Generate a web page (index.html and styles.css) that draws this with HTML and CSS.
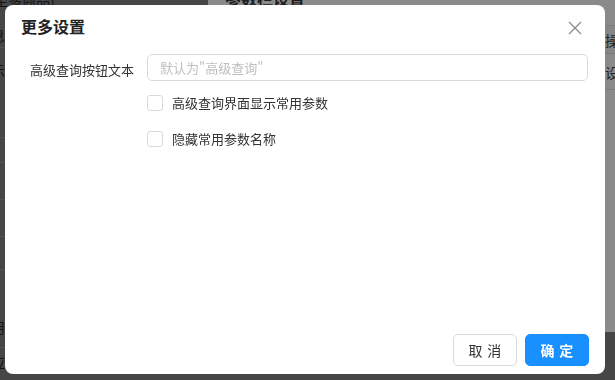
FILE: index.html
```html
<!DOCTYPE html>
<html lang="zh-CN">
<head>
    <meta charset="UTF-8">
    <meta name="viewport" content="width=device-width, initial-scale=1.0">
    <title>更多设置</title>
    <link rel="stylesheet" href="styles.css">
</head>
<body>
    <!-- Page underneath the dialog (already dimmed by the masks) -->
    <div class="page">
        <aside class="side">
            <div class="side-row side-top"><span>至多商品]</span></div>
            <div class="side-row"><span class="cut pad-a">信息</span></div>
            <div class="side-row"><span class="cut pad-b">显示</span></div>
            <div class="side-row"></div>
            <div class="side-row"></div>
            <div class="side-row"></div>
            <div class="side-row"></div>
            <div class="side-row"><span class="cut pad-c">启用</span></div>
            <div class="side-row last"><span class="cut pad-d">对应</span></div>
        </aside>

        <section class="parent">
            <div class="parent-title">参数栏设置</div>
            <div class="parent-table">
                <div class="cell head">参数名称</div>
                <div class="cell head">操作</div>
                <div class="cell">显示</div>
                <div class="cell">设置</div>
            </div>
        </section>
    </div>

    <!-- Dialog -->
    <div class="modal">
        <div class="modal-header">
            <h3>更多设置</h3>
            <button class="close" type="button" aria-label="关闭">
                <svg width="14" height="14" viewBox="0 0 14 14">
                    <path d="M1 1 L13 13 M13 1 L1 13" stroke="#8c8c8c" stroke-width="1.3" fill="none"/>
                </svg>
            </button>
        </div>

        <div class="modal-body">
            <div class="form-row">
                <label for="btnText">高级查询按钮文本</label>
                <input id="btnText" type="text" placeholder="默认为&quot;高级查询&quot;">
            </div>
            <label class="check-row">
                <span class="check-box"></span>
                高级查询界面显示常用参数
            </label>
            <label class="check-row">
                <span class="check-box"></span>
                隐藏常用参数名称
            </label>
        </div>

        <div class="modal-footer">
            <button type="button" class="btn"><span>取消</span></button>
            <button type="button" class="btn btn-primary"><span>确定</span></button>
        </div>
    </div>
</body>
</html>
```

FILE: styles.css
```css
/* Global */
body {
    margin: 0;
    width: 615px;
    height: 380px;
    overflow: hidden;
    background-color: #464646;
    font-family: "Noto Sans CJK SC", "Noto Sans", sans-serif;
    font-size: 13px;
    color: #333333;
}

/* Background page */
.page {
    display: grid;
    grid-template-columns: 208px 1fr;
    height: 380px;
}

.side {
    display: grid;
    grid-template-rows: 6px 42px 90px 25px 37px 37px 33px 78px 32px;
    color: #141414;
    font-size: 14px;
}

.side-row {
    border-bottom: 1px solid #525252;
    box-sizing: border-box;
    overflow: visible;
}

.side-row.last {
    border-bottom: none;
}

.side-top {
    border-bottom: none;
    display: flex;
    align-items: flex-end;
    line-height: 20px;
}

.side-top span {
    margin-left: -6px;
    margin-bottom: -4px;
}

.cut {
    display: block;
    margin-left: -23px;
    line-height: 20px;
}

.pad-a { padding-top: 19px; }
.pad-b { padding-top: 12px; }
.pad-c { padding-top: 47px; }
.pad-d { padding-top: 4px; }

.parent {
    background-color: #8a8a8a;
    height: 332px;
    overflow: hidden;
}

.parent-title {
    margin-top: -12px;
    padding-left: 17px;
    font-size: 16px;
    font-weight: bold;
    line-height: 20px;
    color: #1c1c1c;
}

.parent-table {
    display: grid;
    grid-template-columns: 380px 60px;
    grid-template-rows: 28px 36px;
    margin-top: 17px;
    margin-left: 17px;
    border-top: 1px solid #7a7a7a;
    font-size: 14px;
    color: #222222;
}

.cell {
    display: flex;
    align-items: center;
    border-bottom: 1px solid #7a7a7a;
    white-space: nowrap;
}

.cell.head {
    background-color: #868686;
}

/* Dialog */
.modal {
    position: fixed;
    left: 5px;
    top: 5px;
    width: 600px;
    height: 369px;
    background-color: #ffffff;
    border-radius: 8px;
    display: flex;
    flex-direction: column;
    box-sizing: border-box;
}

.modal-header {
    display: flex;
    align-items: center;
    justify-content: space-between;
    padding: 9px 23px 0 16px;
}

.modal-header h3 {
    margin: 0;
    font-size: 16px;
    font-weight: bold;
    line-height: 24px;
    color: #222222;
}

.close {
    border: none;
    background: none;
    padding: 0;
    width: 14px;
    height: 14px;
    margin-top: 3px;
    cursor: pointer;
    display: block;
}

.close svg {
    display: block;
}

.modal-body {
    padding: 16px 17px 0 25px;
}

.form-row {
    display: flex;
    align-items: flex-start;
}

.form-row label {
    width: 117px;
    flex-shrink: 0;
    padding-top: 2px;
    line-height: 28px;
    color: #333333;
}

.form-row input {
    flex: 1;
    height: 27px;
    box-sizing: border-box;
    border: 1px solid #d9d9d9;
    border-radius: 5px;
    padding: 0 12px;
    font-family: inherit;
    font-size: 13px;
    color: #333333;
    outline: none;
}

.form-row input::placeholder {
    color: #bfbfbf;
}

.check-row {
    display: flex;
    align-items: center;
    gap: 9px;
    margin-left: 117px;
    line-height: 22px;
    color: #333333;
    cursor: pointer;
}

.form-row + .check-row {
    margin-top: 8px;
}

.check-row + .check-row {
    margin-top: 14px;
}

.check-box {
    width: 16px;
    height: 16px;
    box-sizing: border-box;
    border: 1px solid #d9d9d9;
    border-radius: 3px;
    background-color: #ffffff;
}

/* Footer buttons */
.modal-footer {
    margin-top: auto;
    display: flex;
    justify-content: flex-end;
    gap: 8px;
    padding: 0 16px 8px 0;
}

.btn {
    width: 64px;
    height: 32px;
    border: 1px solid #d9d9d9;
    border-radius: 5px;
    background-color: #ffffff;
    font-family: inherit;
    font-size: 14px;
    color: #333333;
    cursor: pointer;
    padding: 0;
}

/* two chinese chars get spread apart */
.btn span {
    letter-spacing: 0.34em;
    margin-right: -0.34em;
}

.btn-primary {
    background-color: #1890ff;
    border-color: #1890ff;
    color: #ffffff;
    font-weight: bold;
}
```
